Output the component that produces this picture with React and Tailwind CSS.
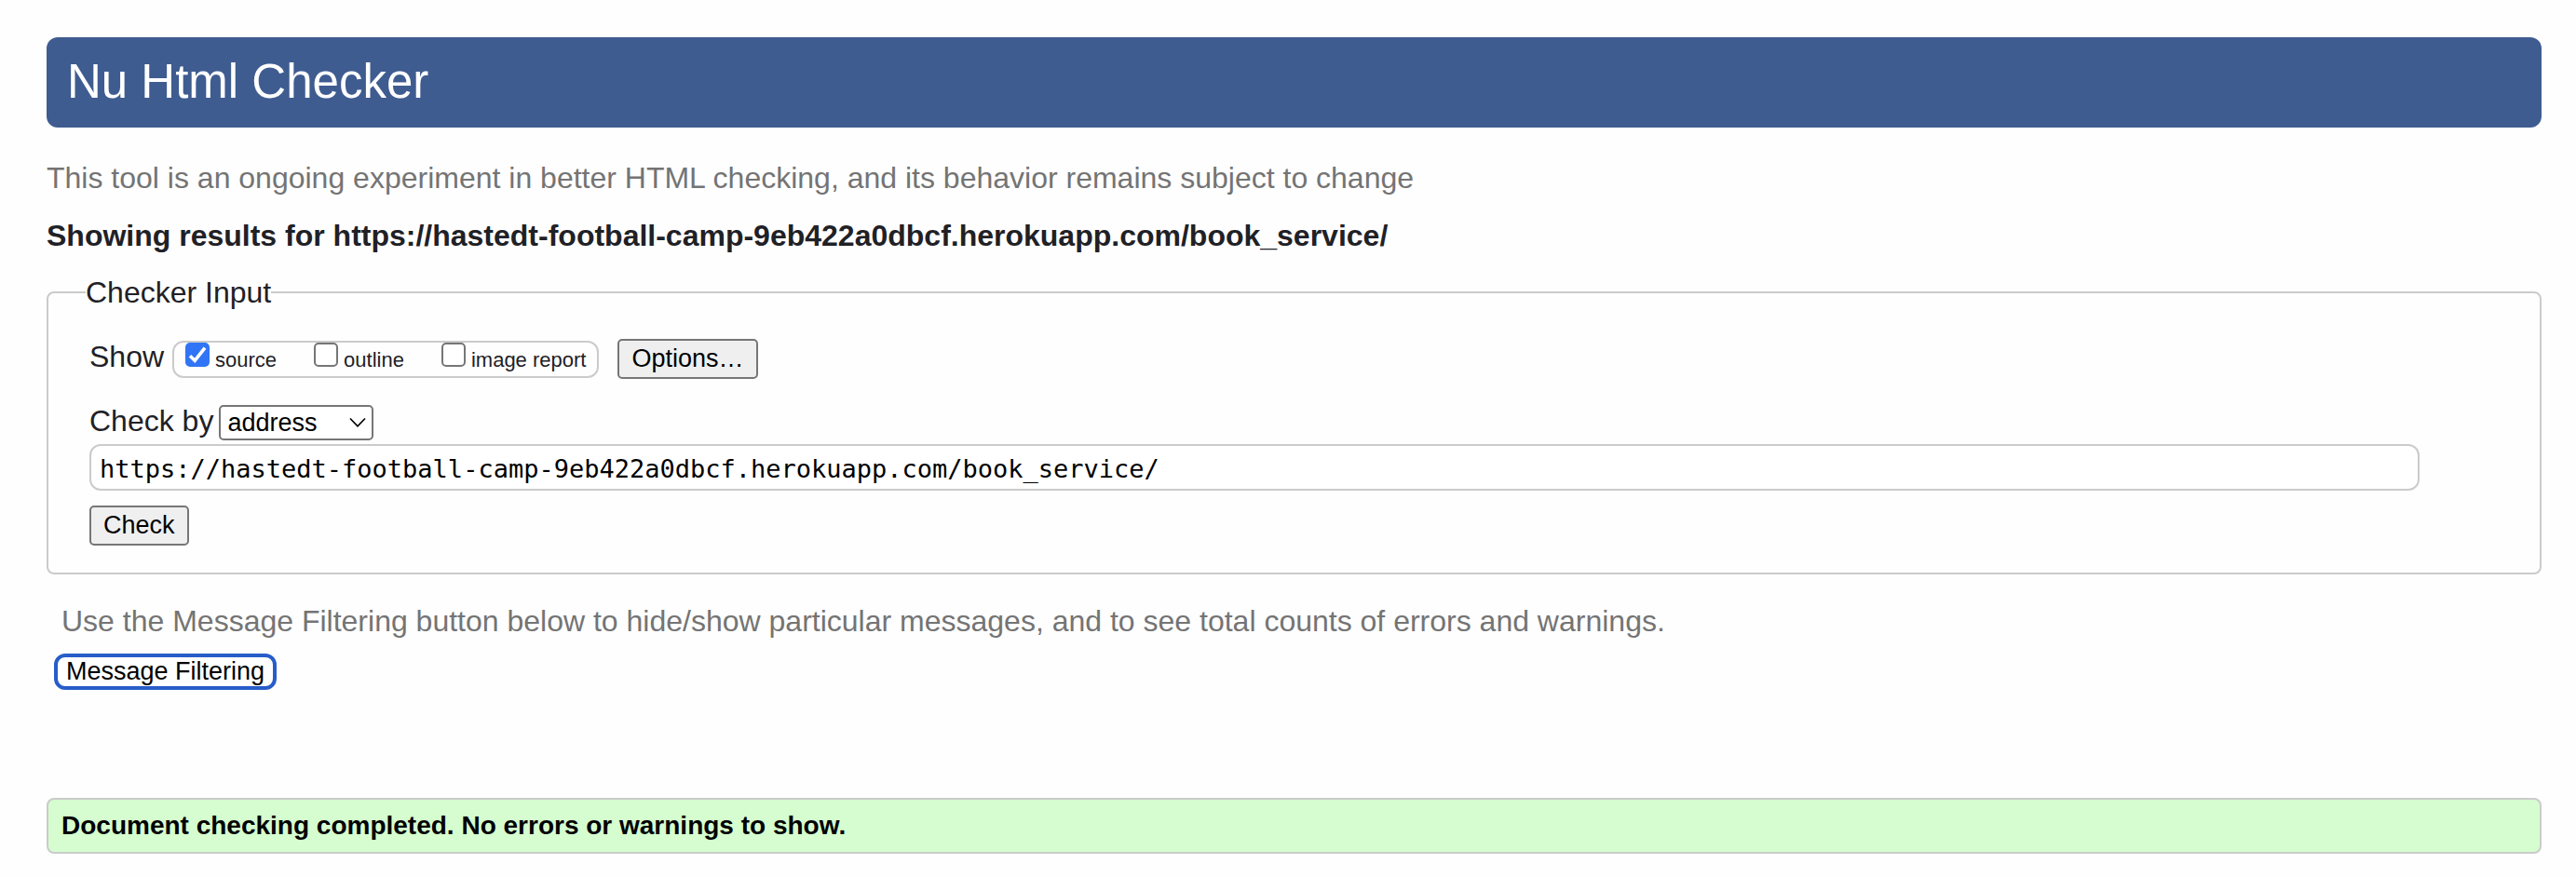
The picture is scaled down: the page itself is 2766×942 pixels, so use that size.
import { useState } from "react";

const URL_TEXT = "https://hastedt-football-camp-9eb422a0dbcf.herokuapp.com/book_service/";

const buttonClass =
  "rounded-[5px] border-2 border-[#767676] bg-[#efefef] px-[13px] text-[27px] leading-[39px] text-black";

function ShowOption({ id, label, defaultChecked = false }) {
  const [checked, setChecked] = useState(defaultChecked);
  return (
    <div className="flex items-baseline gap-1.5">
      <span className="relative inline-block">
        <input
          id={id}
          type="checkbox"
          checked={checked}
          onChange={(e) => setChecked(e.target.checked)}
          className="block size-[26px] appearance-none rounded-[5px] border-2 border-[#767676] bg-white checked:border-[#3175f6] checked:bg-[#3175f6]"
        />
        {checked && (
          <svg viewBox="0 0 26 26" className="pointer-events-none absolute inset-0 size-[26px]" aria-hidden="true">
            <path d="M5 14.2 10.2 19.3 21 5.6" fill="none" stroke="#fff" strokeWidth="3.6" />
          </svg>
        )}
      </span>
      <label htmlFor={id}>{label}</label>
    </div>
  );
}

export default function App() {
  const [address, setAddress] = useState(URL_TEXT);
  return (
    <div className="min-h-screen bg-[#fefefe] pt-10 pr-[37px] pb-5 pl-[50px] font-['Liberation_Sans',Arial,sans-serif] text-[32px] leading-[36px] text-[#1f2126]">
      <header className="rounded-xl bg-[#3f5c91] px-[22px] pt-[18px] pb-[19px]">
        <h1 className="text-[51px] leading-[60px] text-white">Nu Html Checker</h1>
      </header>

      <main>
        <p className="mt-9 text-[#747474]">
          This tool is an ongoing experiment in better HTML checking, and its behavior remains subject to change
        </p>
        <h2 className="mt-[26px] font-bold">Showing results for {URL_TEXT}</h2>

        <form onSubmit={(e) => e.preventDefault()}>
          <fieldset className="mt-[25px] rounded-lg border-2 border-[#cbcbcb] px-10 pb-[29px]">
            <legend>Checker Input</legend>
            <div className="px-1 pt-8">
              <div className="flex items-baseline">
                <span>Show</span>
                <div className="mr-5 ml-[9px] flex items-baseline gap-10 rounded-xl border-2 border-[#cbcbcb] px-3 text-[22px] leading-[35px]">
                  <ShowOption id="show-source" label="source" defaultChecked />
                  <ShowOption id="show-outline" label="outline" />
                  <ShowOption id="show-image-report" label="image report" />
                </div>
                <button type="button" className={buttonClass}>
                  Options…
                </button>
              </div>

              <div className="mt-[27px] flex items-baseline gap-1.5">
                <label htmlFor="check-by">Check by</label>
                <div className="relative">
                  <select
                    id="check-by"
                    defaultValue="address"
                    className="block w-[166px] appearance-none rounded-[5px] border-2 border-[#767676] bg-white px-[7px] text-[27px] leading-[34px] text-black"
                  >
                    <option value="address">address</option>
                    <option value="file">file upload</option>
                    <option value="text">text input</option>
                  </select>
                  <svg
                    viewBox="0 0 18 12"
                    className="pointer-events-none absolute top-[13px] right-2 h-3 w-[18px]"
                    aria-hidden="true"
                  >
                    <path d="M1 1.5 9 9.8 17 1.5" fill="none" stroke="#000" strokeWidth="1.7" />
                  </svg>
                </div>
              </div>

              <div className="mt-1 pr-[85px]">
                <input
                  type="text"
                  aria-label="Address"
                  value={address}
                  onChange={(e) => setAddress(e.target.value)}
                  className="block h-[50px] w-full rounded-xl border-2 border-[#cbcbcb] bg-white px-[9px] pt-[3px] font-['DejaVu_Sans_Mono',monospace] text-[27px] text-black"
                />
              </div>

              <button type="submit" className={`mt-4 block ${buttonClass}`}>
                Check
              </button>
            </div>
          </fieldset>
        </form>

        <p className="mt-8 px-4 text-[#747474]">
          Use the Message Filtering button below to hide/show particular messages, and to see total counts of errors and
          warnings.
        </p>
        <button
          type="button"
          className="mt-[17px] ml-2 block rounded-xl border-4 border-[#275dc9] bg-white px-[9px] text-[27px] leading-[31px] text-black"
        >
          Message Filtering
        </button>

        <p className="mt-[116px] rounded-lg border-2 border-[#cbcbcb] bg-[#d5fdcf] px-3.5 text-[28px] leading-[56px] font-bold text-black">
          Document checking completed. No errors or warnings to show.
        </p>
      </main>
    </div>
  );
}
